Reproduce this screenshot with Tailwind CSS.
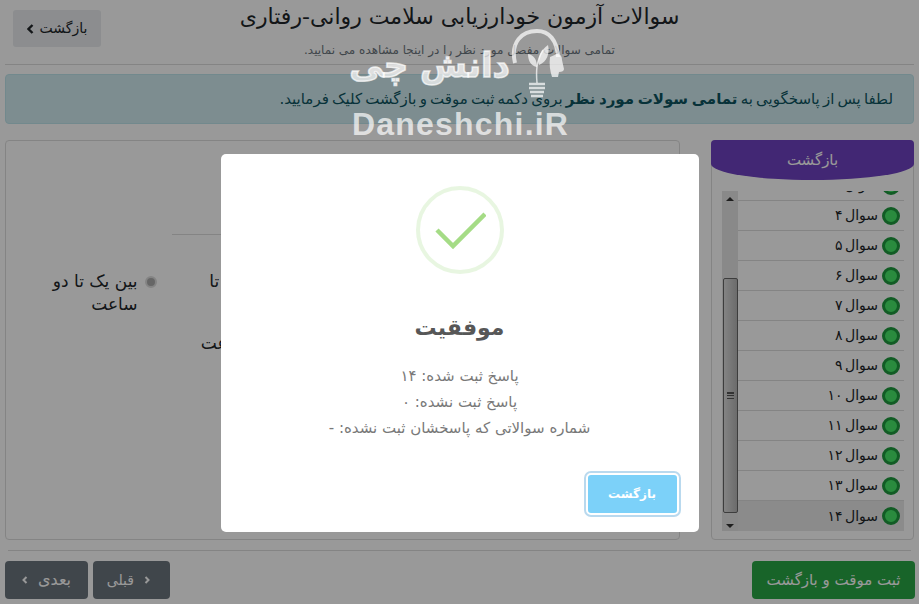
<!DOCTYPE html>
<html lang="fa" dir="rtl">
<head>
  <meta charset="UTF-8" />
  <meta name="viewport" content="width=device-width, initial-scale=1.0"/>
  <title>سوالات آزمون</title>
  <script src="https://cdn.jsdelivr.net/npm/@tailwindcss/browser@4"></script>
</head>
<body class="relative h-[604px] w-[919px] overflow-hidden bg-white font-['DejaVu_Sans',sans-serif] text-[#212529]">

  <!-- page header -->
  <header class="mx-[5px] grid h-[65px] grid-cols-[1fr_auto_1fr] border-b border-[#ddd]">
    <div></div>
    <div class="text-center">
      <h1 class="text-[22px] leading-[34px]">سوالات آزمون خودارزیابی سلامت روانی-رفتاری</h1>
      <p class="mt-[7px] text-[12px] leading-[18px] text-[#6c757d]">تمامی سوالات مفصل مورد نظر را در اینجا مشاهده می نمایید.</p>
    </div>
    <div class="flex items-start justify-end pl-[8px] pt-[10px]">
      <a class="flex h-[37px] w-[88px] items-center justify-center gap-[6px] rounded-[3px] bg-[#e9ecef] text-[14px]">
        بازگشت
        <svg class="h-[10px] w-[7px]" viewBox="0 0 7 10" fill="none" stroke="currentColor" stroke-width="2.4"><path d="M5.5 1 1.5 5l4 4"/></svg>
      </a>
    </div>
  </header>

  <!-- notice -->
  <div class="mx-[5px] mt-[9px] flex h-[50px] items-center rounded-[4px] border border-[#bee5eb] bg-[#d1ecf1] pr-[20px] text-[15px] text-[#0c5460] [word-spacing:-1.6px]">
    <p>لطفا پس از پاسخگویی به <b>تمامی سولات مورد نظر</b> بروی دکمه ثبت موقت و بازگشت کلیک فرمایید.</p>
  </div>

  <!-- questions + content -->
  <div class="mx-[5px] mt-[16px] flex h-[400px] gap-[31px]">
    <aside class="relative h-[400px] w-[203px] rounded-[4px] border border-[#ddd]">
      <div class="absolute -inset-x-px -top-px z-10 flex h-[40px] items-center justify-center rounded-t-[4px] rounded-b-[50%_40%] bg-[#6f42c1] text-[15px] text-white">بازگشت</div>
      <div class="mt-[50px] flex h-[340px] pl-[10px] pr-[9px]">
        <ul class="flex h-[340px] flex-1 flex-col justify-end overflow-hidden text-[14px] [word-spacing:-2px]">
          <li class="flex h-[30px] shrink-0 items-center gap-[4px] border-b border-[#ddd] pr-[4px]"><span class="h-[18px] w-[18px] rounded-full border-[3px] border-[#1f9a3f] bg-[#46e868]"></span>سوال ۳</li>
          <li class="flex h-[30px] shrink-0 items-center gap-[4px] border-b border-[#ddd] pr-[4px]"><span class="h-[18px] w-[18px] rounded-full border-[3px] border-[#1f9a3f] bg-[#46e868]"></span>سوال ۴</li>
          <li class="flex h-[30px] shrink-0 items-center gap-[4px] border-b border-[#ddd] pr-[4px]"><span class="h-[18px] w-[18px] rounded-full border-[3px] border-[#1f9a3f] bg-[#46e868]"></span>سوال ۵</li>
          <li class="flex h-[30px] shrink-0 items-center gap-[4px] border-b border-[#ddd] pr-[4px]"><span class="h-[18px] w-[18px] rounded-full border-[3px] border-[#1f9a3f] bg-[#46e868]"></span>سوال ۶</li>
          <li class="flex h-[30px] shrink-0 items-center gap-[4px] border-b border-[#ddd] pr-[4px]"><span class="h-[18px] w-[18px] rounded-full border-[3px] border-[#1f9a3f] bg-[#46e868]"></span>سوال ۷</li>
          <li class="flex h-[30px] shrink-0 items-center gap-[4px] border-b border-[#ddd] pr-[4px]"><span class="h-[18px] w-[18px] rounded-full border-[3px] border-[#1f9a3f] bg-[#46e868]"></span>سوال ۸</li>
          <li class="flex h-[30px] shrink-0 items-center gap-[4px] border-b border-[#ddd] pr-[4px]"><span class="h-[18px] w-[18px] rounded-full border-[3px] border-[#1f9a3f] bg-[#46e868]"></span>سوال ۹</li>
          <li class="flex h-[30px] shrink-0 items-center gap-[4px] border-b border-[#ddd] pr-[4px]"><span class="h-[18px] w-[18px] rounded-full border-[3px] border-[#1f9a3f] bg-[#46e868]"></span>سوال ۱۰</li>
          <li class="flex h-[30px] shrink-0 items-center gap-[4px] border-b border-[#ddd] pr-[4px]"><span class="h-[18px] w-[18px] rounded-full border-[3px] border-[#1f9a3f] bg-[#46e868]"></span>سوال ۱۱</li>
          <li class="flex h-[30px] shrink-0 items-center gap-[4px] border-b border-[#ddd] pr-[4px]"><span class="h-[18px] w-[18px] rounded-full border-[3px] border-[#1f9a3f] bg-[#46e868]"></span>سوال ۱۲</li>
          <li class="flex h-[30px] shrink-0 items-center gap-[4px] border-b border-[#ddd] pr-[4px]"><span class="h-[18px] w-[18px] rounded-full border-[3px] border-[#1f9a3f] bg-[#46e868]"></span>سوال ۱۳</li>
          <li class="flex h-[30px] shrink-0 items-center gap-[4px] bg-[#e8e8e8] pr-[4px]"><span class="h-[18px] w-[18px] rounded-full border-[3px] border-[#1f9a3f] bg-[#46e868]"></span>سوال ۱۴</li>
        </ul>
        <!-- scrollbar -->
        <div class="flex h-[340px] w-[16px] flex-col items-center bg-[#e4e4e4]">
          <div class="mt-[6px] h-0 w-0 border-x-[4px] border-b-[4px] border-x-transparent border-b-[#333]"></div>
          <div class="mt-[77px] flex h-[235px] w-[15px] items-center justify-center rounded-[2px] border border-[#666] bg-gradient-to-r from-[#dcdcdc] to-[#b4b4b4]">
            <div class="h-[7px] w-[7px] border-y border-[#555] bg-[linear-gradient(#555_1px,transparent_1px,transparent_2px,#555_2px,#555_3px,transparent_3px)]"></div>
          </div>
          <div class="mt-[11px] h-0 w-0 border-x-[4px] border-t-[4px] border-x-transparent border-t-[#333]"></div>
        </div>
      </div>
    </aside>

    <main class="h-[400px] w-[675px] rounded-[4px] border border-[#ddd]">
      <p class="mt-[40px] text-center text-[15px]">مدت زمان استفاده روزانه؟</p>
      <hr class="mx-[166px] mt-[30px] border-[#ddd]" />
      <div class="mt-[35px] grid grid-cols-[repeat(4,118px)] justify-center gap-x-[42px] gap-y-[16px] pr-[10px] text-[17px] leading-[23px]">
        <label class="flex items-start gap-[7px]"><input type="radio" class="mt-[6px] h-[12px] w-[12px] shrink-0 appearance-none rounded-full border-2 border-[#ddd] bg-[#aaa]" /><span>کمتر از<br />یک ساعت</span></label>
        <label class="flex items-start gap-[7px]"><input type="radio" class="mt-[6px] h-[12px] w-[12px] shrink-0 appearance-none rounded-full border-2 border-[#ddd] bg-[#aaa]" /><span>بین دو تا<br />سه ساعت</span></label>
        <label class="flex items-start gap-[7px]"><input type="radio" class="mt-[6px] h-[12px] w-[12px] shrink-0 appearance-none rounded-full border-2 border-[#ddd] bg-[#aaa]" /><span>نیم ساعت تا<br />یک ساعت</span></label>
        <label class="flex items-start gap-[7px]"><input type="radio" class="mt-[6px] h-[12px] w-[12px] shrink-0 appearance-none rounded-full border-2 border-[#ddd] bg-[#aaa]" />بین یک تا دو ساعت</label>
        <div></div>
        <div></div>
        <label class="-mr-[26px] flex items-start gap-[7px] whitespace-nowrap"><input type="radio" class="mt-[6px] h-[12px] w-[12px] shrink-0 appearance-none rounded-full border-2 border-[#ddd] bg-[#aaa]" />بیش از دو ساعت</label>
      </div>
    </main>
  </div>

  <!-- footer -->
  <div class="mx-[8px] mt-[10px] border-t border-[#ddd]"></div>
  <footer class="ml-[5px] mr-[4px] mt-[10px] flex justify-between">
    <button class="h-[38px] w-[163px] rounded-[4px] bg-[#28a745] text-[15px] text-white">ثبت موقت و بازگشت</button>
    <div class="flex gap-[5px]">
      <button class="flex h-[38px] w-[77px] items-center gap-[10px] rounded-[4px] bg-[#6c757d] pr-[20px] text-[14px] text-white">
        <svg class="h-[8px] w-[6px]" viewBox="0 0 6 8" fill="none" stroke="currentColor" stroke-width="2"><path d="M1.5 1 4.5 4l-3 3"/></svg>
        قبلی
      </button>
      <button class="flex h-[38px] w-[83px] items-center justify-center gap-[10px] rounded-[4px] bg-[#6c757d] text-[16px] text-white">بعدی
        <svg class="h-[8px] w-[6px]" viewBox="0 0 6 8" fill="none" stroke="currentColor" stroke-width="2"><path d="M4.5 1 1.5 4l3 3"/></svg>
      </button>
    </div>
  </footer>

  <!-- success dialog -->
  <div class="absolute inset-0 z-20 flex justify-center bg-black/40 pt-[154px]">
    <div class="flex h-[378px] w-[478px] flex-col items-center rounded-[5px] bg-white">
      <div class="mt-[32px] flex h-[88px] w-[88px] items-center justify-center rounded-full border-4 border-[#a5dc86]/25">
        <svg class="h-[40px] w-[52px]" viewBox="0 0 52 40" fill="none" stroke="#a5dc86" stroke-width="4.5"><path d="M3 20 19 36 51 4"/></svg>
      </div>
      <h2 class="mt-[34px] text-[22px] font-bold leading-[40px] text-[#575757]">موفقیت</h2>
      <div class="mt-[15px] text-center text-[15px] leading-[26px] text-[#797979]">
        <p>پاسخ ثبت شده: ۱۴</p>
        <p>پاسخ ثبت نشده: ۰</p>
        <p>شماره سوالاتی که پاسخشان ثبت نشده: -</p>
      </div>
      <div class="mt-[32px] flex w-full justify-start pr-[20px]">
        <button class="h-[42px] w-[93px] rounded-[5px] border-2 border-white bg-[#7cd1f9] text-[12px] font-bold text-white ring-2 ring-[#b9d9ee]">بازگشت</button>
      </div>
    </div>
  </div>

  <!-- watermark -->
  <div dir="ltr" class="absolute left-[352px] top-[26px] z-30 w-[222px] text-white/70">
    <div class="flex h-[80px] items-start">
      <span dir="rtl" class="mt-[14px] w-[158px] whitespace-nowrap text-[34px] font-bold leading-[50px] [-webkit-text-stroke:1.5px_currentColor]">دانش چی</span>
      <svg class="h-[80px] w-[58px] shrink-0" viewBox="0 0 58 80" fill="none" stroke="currentColor">
        <path stroke-width="4" d="M5 37C0 16 12 5 27 5c12 0 20 9 21 26"/>
        <path fill="currentColor" stroke="none" d="M40 31 47 28c4 0 5 3 5 6l2 9c0 2-2 3-5 3l-1 5-6 0c-2-6-3-13-2-20z"/>
        <path stroke-width="1.5" d="M27 57C26 46 26 36 33 24"/>
        <path fill="currentColor" stroke="none" d="M38 19c2 8-1 17-9 20-2-7 2-15 9-20zM18 28c6 1 9 6 9 13-6-1-9-6-9-13z"/>
        <path stroke-width="2.4" d="M19 58h16M19 62h16M20 66h14M21 70h12"/>
      </svg>
    </div>
    <div class="text-[32px] font-bold leading-[36px] tracking-[1.2px] font-['Liberation_Sans',sans-serif]">Daneshchi.iR</div>
  </div>
</body>
</html>
